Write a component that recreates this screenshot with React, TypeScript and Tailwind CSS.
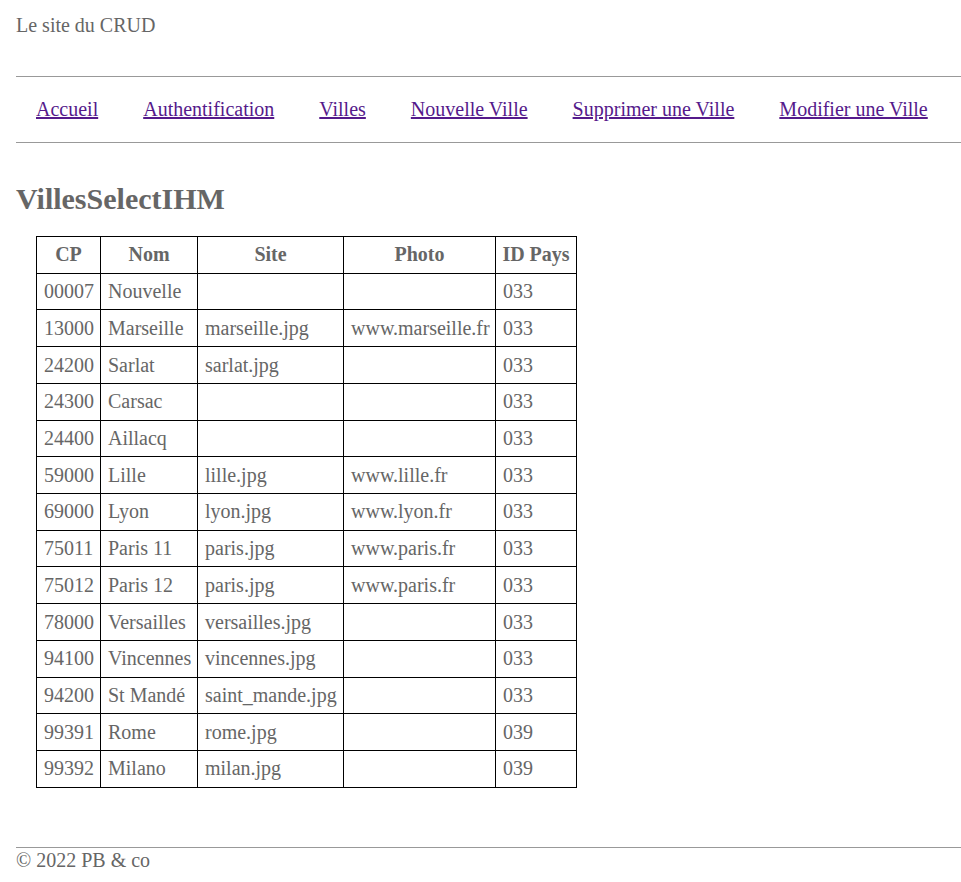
import React from "react";

const rows: [string, string, string, string, string][] = [
  ["00007", "Nouvelle", "", "", "033"],
  ["13000", "Marseille", "marseille.jpg", "www.marseille.fr", "033"],
  ["24200", "Sarlat", "sarlat.jpg", "", "033"],
  ["24300", "Carsac", "", "", "033"],
  ["24400", "Aillacq", "", "", "033"],
  ["59000", "Lille", "lille.jpg", "www.lille.fr", "033"],
  ["69000", "Lyon", "lyon.jpg", "www.lyon.fr", "033"],
  ["75011", "Paris 11", "paris.jpg", "www.paris.fr", "033"],
  ["75012", "Paris 12", "paris.jpg", "www.paris.fr", "033"],
  ["78000", "Versailles", "versailles.jpg", "", "033"],
  ["94100", "Vincennes", "vincennes.jpg", "", "033"],
  ["94200", "St Mandé", "saint_mande.jpg", "", "033"],
  ["99391", "Rome", "rome.jpg", "", "039"],
  ["99392", "Milano", "milan.jpg", "", "039"],
];

const links = [
  "Accueil",
  "Authentification",
  "Villes",
  "Nouvelle Ville",
  "Supprimer une Ville",
  "Modifier une Ville",
];

export default function App() {
  const th = "border border-black px-[6px] h-[36.73px] font-bold text-center whitespace-nowrap";
  const td = "border border-black pl-[7px] pr-[5px] h-[36.73px] text-left whitespace-nowrap";
  return (
    <div
      className="bg-white text-[#666] text-[20px] min-h-[882px] pl-4"
      style={{ fontFamily: '"Liberation Serif", "Times New Roman", serif' }}
    >
      <div className="pt-[14px] h-[76px] leading-[23px]">Le site du CRUD</div>
      <div className="border-t border-[#999]" />
      <nav className="flex items-center h-[65px] pl-5 gap-[45px] leading-[23px]">
        {links.map((l) => (
          <a key={l} href="#" className="underline text-[#551a8b]">
            {l}
          </a>
        ))}
      </nav>
      <div className="border-t border-[#999]" />
      <h1 className="text-[30px] font-bold mt-[38px] leading-[36px]">VillesSelectIHM</h1>
      <table className="border-collapse ml-5 mt-[19px] leading-[23px]">
        <thead>
          <tr>
            <th className={th + " w-[64px]"}>CP</th>
            <th className={th + " w-[97px]"}>Nom</th>
            <th className={th + " w-[146px]"}>Site</th>
            <th className={th + " w-[152px]"}>Photo</th>
            <th className={th + " w-[81px]"}>ID Pays</th>
          </tr>
        </thead>
        <tbody>
          {rows.map((r) => (
            <tr key={r[0]}>
              {r.map((c, i) => (
                <td key={i} className={td}>
                  {c}
                </td>
              ))}
            </tr>
          ))}
        </tbody>
      </table>
      <div className="border-t border-[#999] mt-[59px]" />
      <div className="leading-[23px] pt-[1px]">© 2022 PB &amp; co</div>
    </div>
  );
}
